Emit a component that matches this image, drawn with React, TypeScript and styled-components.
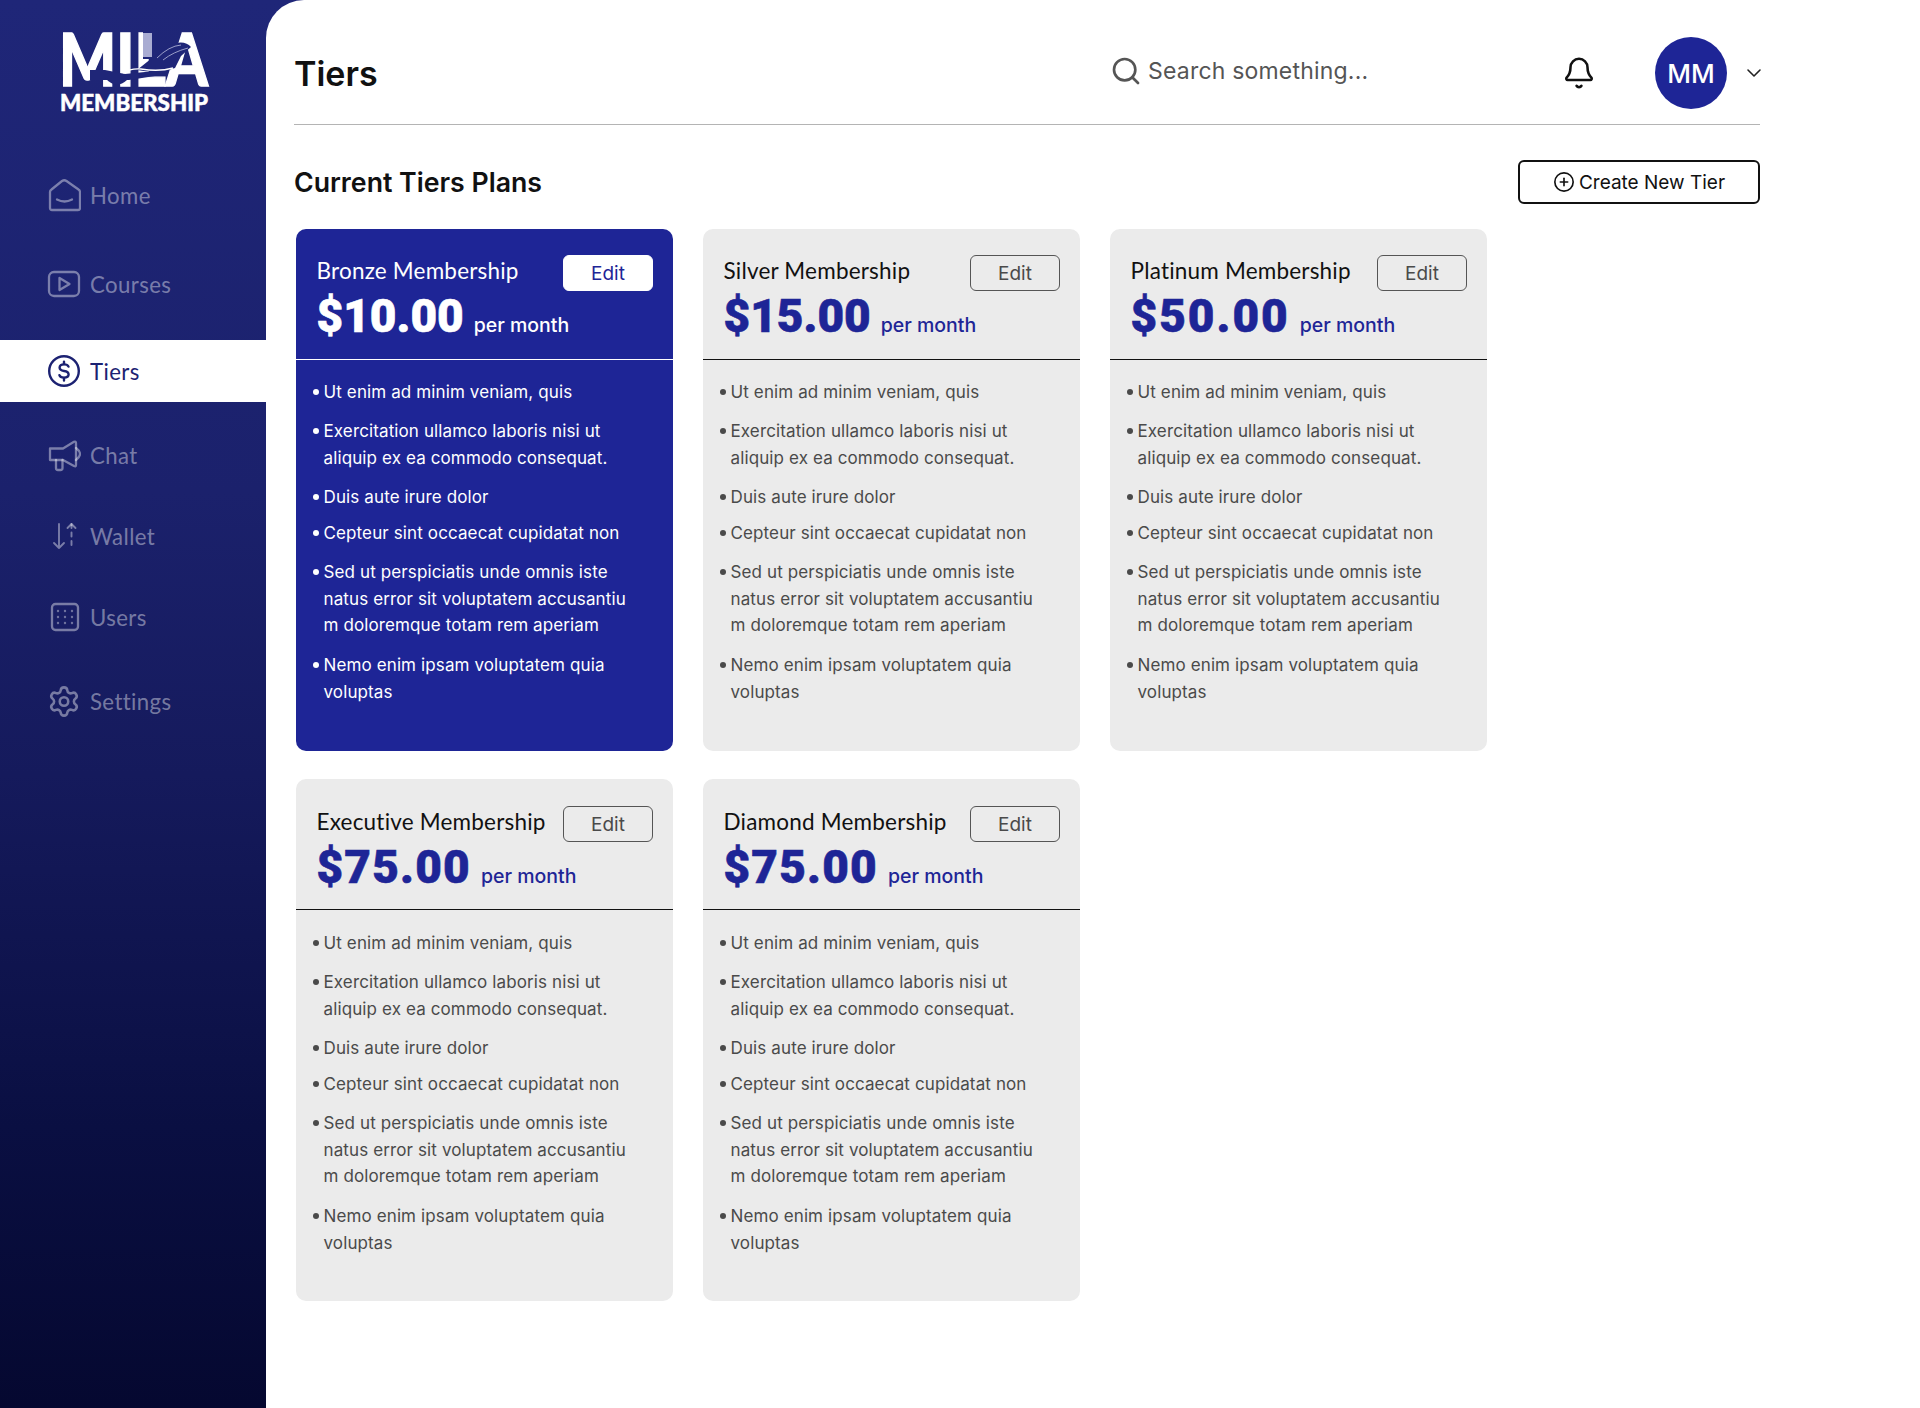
import React from "react";
import styled, { createGlobalStyle } from "styled-components";
import { Search, Bell, ChevronDown, CirclePlus, Settings } from "lucide-react";

const Global = createGlobalStyle`
  html, body { margin: 0; padding: 0; background: #fff; }
  * { box-sizing: border-box; }
  body { font-family: "Inter", "Liberation Sans", sans-serif; }
`;

const Shell = styled.div`
  display: flex;
  width: 1920px;
  height: 1408px;
  overflow: hidden;
  background: linear-gradient(180deg, #1f2678 0%, #1b216c 35%, #151a5c 55%, #0a0f42 80%, #050830 100%);
`;
const Sidebar = styled.aside`
  width: 266px;
  flex: none;
  display: flex;
  flex-direction: column;
`;
const LogoWrap = styled.div`
  height: 164px;
  padding: 30px 0 0 59px;
`;
const Nav = styled.nav`
  display: flex;
  flex-direction: column;
`;
const NavItem = styled.div<{ $active?: boolean; $gap: number }>`
  height: 62px;
  margin-top: ${(p) => p.$gap}px;
  padding-left: 47px;
  display: flex;
  align-items: center;
  gap: 9px;
  font-family: "Lato", sans-serif;
  font-size: 22.2px;
  letter-spacing: 0.4px;
  background: ${(p) => (p.$active ? "#fff" : "transparent")};
  color: ${(p) => (p.$active ? "#1c2272" : "rgba(255,255,255,0.42)")};
`;
const NavIcon = styled.span`
  width: 34px;
  height: 34px;
  flex: none;
  display: flex;
  align-items: center;
  justify-content: center;
`;
const Main = styled.main`
  flex: 1;
  min-width: 0;
  background: #fff;
  border-top-left-radius: 38px;
  padding: 0 160px 0 28px;
`;
const Header = styled.header`
  height: 125px;
  padding-top: 22px;
  display: flex;
  align-items: center;
  border-bottom: 1.5px solid #b4b4b4;
`;
const Title = styled.h1`
  margin: 0;
  width: 816px;
  flex: none;
  font-family: "Inter", sans-serif;
  font-size: 34px;
  font-weight: 600;
  color: #111;
`;
const SearchBox = styled.div`
  width: 452px;
  flex: none;
  padding-bottom: 5px;
  display: flex;
  align-items: center;
  gap: 6px;
  color: #555;
  font-size: 23px;
  letter-spacing: 0.2px;
`;
const BellBox = styled.div`
  width: 93px;
  flex: none;
  display: flex;
  color: #111;
`;
const Avatar = styled.div`
  width: 72px;
  height: 72px;
  flex: none;
  border-radius: 50%;
  background: #1e2596;
  color: #fff;
  font-family: "Inter", sans-serif;
  font-weight: 500;
  font-size: 26px;
  display: flex;
  align-items: center;
  justify-content: center;
`;
const Chevron = styled.div`
  margin: 0 -6px 0 15px;
  flex: none;
  display: flex;
  color: #222;
`;
const SectionHead = styled.div`
  height: 104px;
  padding-top: 10px;
  display: flex;
  align-items: center;
  justify-content: space-between;
`;
const SectionTitle = styled.h2`
  margin: 0;
  font-size: 26.7px;
  font-weight: 600;
  color: #111;
`;
const CreateButton = styled.button`
  width: 242px;
  height: 44px;
  border: 2px solid #111;
  border-radius: 6px;
  background: #fff;
  color: #111;
  font-family: "Inter", sans-serif;
  font-size: 19px;
  font-weight: 400;
  display: flex;
  align-items: center;
  justify-content: center;
  gap: 4px;
  padding: 0;
`;
const Grid = styled.div`
  display: grid;
  grid-template-columns: repeat(3, 377px);
  grid-auto-rows: 522px;
  column-gap: 30px;
  row-gap: 28px;
  padding-left: 2px;
`;
const Card = styled.article<{ $active?: boolean }>`
  border-radius: 10px;
  background: ${(p) => (p.$active ? "#1e2596" : "#ebebeb")};
  color: ${(p) => (p.$active ? "#fff" : "#4a4a4a")};
`;
const CardHead = styled.div<{ $active?: boolean; $lower?: boolean }>`
  height: 131px;
  padding: ${(p) => (p.$lower ? 27 : 26)}px 20px 0 20.5px;
  border-bottom: 1.5px solid ${(p) => (p.$active ? "#fff" : "#111")};
`;
const PlanRow = styled.div`
  display: flex;
  justify-content: space-between;
  align-items: flex-start;
`;
const PlanName = styled.div<{ $active?: boolean }>`
  font-family: "Lato", sans-serif;
  font-size: 22.5px;
  line-height: 31px;
  letter-spacing: 0.2px;
  white-space: nowrap;
  color: ${(p) => (p.$active ? "#fff" : "#111")};
`;
const EditButton = styled.button<{ $active?: boolean }>`
  width: 90px;
  height: 36px;
  border-radius: 6px;
  border: 1.5px solid ${(p) => (p.$active ? "#fff" : "#555")};
  background: ${(p) => (p.$active ? "#fff" : "transparent")};
  color: ${(p) => (p.$active ? "#1e2596" : "#4a4a4a")};
  font-family: "Inter", sans-serif;
  font-size: 19px;
  padding: 0;
`;
const PriceRow = styled.div`
  display: flex;
  align-items: baseline;
  gap: 10px;
  margin-top: -4px;
`;
const Price = styled.span<{ $active?: boolean; $track: number }>`
  font-family: "Roboto", sans-serif;
  font-size: 46px;
  line-height: 58px;
  font-weight: 900;
  letter-spacing: ${(p) => p.$track}px;
  -webkit-text-stroke: 0.6px currentColor;
  color: ${(p) => (p.$active ? "#fff" : "#1e2596")};
`;
const Per = styled.span<{ $active?: boolean }>`
  font-size: 19.5px;
  font-weight: 500;
  color: ${(p) => (p.$active ? "#fff" : "#1e2596")};
`;
const List = styled.ul<{ $lower?: boolean }>`
  list-style: none;
  margin: 0;
  padding: ${(p) => (p.$lower ? 20 : 19)}px 16px 0 17px;
`;
const Item = styled.li<{ $mt: number }>`
  position: relative;
  margin-top: ${(p) => p.$mt}px;
  padding-left: 10.5px;
  font-size: 17px;
  line-height: 26.6px;
  letter-spacing: 0.12px;
  &::before {
    content: "";
    position: absolute;
    left: 0;
    top: 10px;
    width: 6px;
    height: 6px;
    border-radius: 50%;
    background: currentColor;
  }
`;

const Stroke = { fill: "none", stroke: "currentColor", strokeWidth: 2.3, strokeLinecap: "round", strokeLinejoin: "round" } as const;

const HomeIcon = () => (
  <svg width="34" height="34" viewBox="0 0 34 34" {...Stroke}>
    <path d="M3 14 Q3 12.5 4.5 11.5 L15 3 Q17.3 1.5 19.5 3 L31.5 11.5 Q33 12.5 33 14 V30 Q33 32 31 32 H5 Q3 32 3 30 Z" />
    <path d="M10 21.5 Q17.5 25.5 25 21.5" />
  </svg>
);
const PlayIcon = () => (
  <svg width="34" height="28" viewBox="0 0 34 28" {...Stroke}>
    <rect x="2" y="2" width="30" height="24" rx="5" />
    <path d="M12.5 8 L22.5 14 L12.5 20 Z" />
  </svg>
);
const DollarIcon = () => (
  <svg width="34" height="34" viewBox="0 0 34 34" fill="none" stroke="currentColor" strokeLinecap="round">
    <circle cx="17" cy="17" r="14.8" strokeWidth="2.4" />
    <path d="M21.5 12.6 Q20.6 10.4 17 10.4 Q12.6 10.4 12.6 13.6 Q12.6 16.4 17 17 Q21.6 17.6 21.6 20.6 Q21.6 23.6 17 23.6 Q13.2 23.6 12.4 21.2" strokeWidth="2.4" />
    <path d="M17 7.6 V10 M17 24 V26.6" strokeWidth="2.4" />
  </svg>
);
const MegaphoneIcon = () => (
  <svg width="34" height="34" viewBox="0 0 34 34" {...Stroke}>
    <path d="M3 10.5 H16 L27 3.8 Q29 3 29 5 V27 Q29 29 27 28 L16 22 H3 Z" />
    <path d="M9 22 V30 Q9 32 11 32 H13.5 Q15.5 32 15.5 30 V22" />
    <path d="M29 10 Q33 13 33 16 Q33 19 29 22" />
  </svg>
);
const ArrowsIcon = () => (
  <svg width="34" height="34" viewBox="0 0 34 34" {...Stroke} strokeWidth={1.9}>
    <path d="M12 5 V29 M7 24 L12 29 L17 24" />
    <path d="M24.5 5 V30" strokeDasharray="4 4.5" />
    <path d="M20.5 9 L24.5 5 L28.5 9" />
  </svg>
);
const DotsIcon = () => (
  <svg width="34" height="34" viewBox="0 0 34 34" {...Stroke}>
    <rect x="5" y="4" width="26" height="26" rx="3.5" />
    {[11, 18, 25].map((x) =>
      [11, 17, 23].map((y) => <circle key={x + "-" + y} cx={x} cy={y} r="0.4" strokeWidth="1.6" />)
    )}
  </svg>
);

const LogoMark = styled.svg`
  display: block;
  overflow: visible;
`;

const MilaLogo = () => (
  <LogoMark width="152" height="84" viewBox="0 0 152 84">
    <text x="0" y="56" fontFamily="Lato" fontWeight="900" fontSize="72" textLength="149" lengthAdjust="spacingAndGlyphs" fill="#fff" stroke="#fff" strokeWidth="1.4">MILA</text>
    <path d="M31 40 H46 L66 44 L96 41 L96 46 L70 50 H31 Z" fill="#1f2678" />
    <path d="M46 48 Q57 60 68 50 L68 46 H46 Z" fill="#1f2678" />
    <path d="M84 0 H96 V29 H84 Z" fill="#1f2678" />
    <rect x="84" y="3" width="9" height="24" fill="#a9acd2" />
    <path d="M93 28 L117 13 Q127 11 132 17 L122 26 L116 38 Q100 44 78 40 Z" fill="#1f2678" />
    <path d="M98 28 Q110 16 122 15 M104 30 Q114 22 129 18" fill="none" stroke="#9a9ec8" strokeWidth="1" />
    <path d="M64 43 Q72 38 82 39 Q100 42 114 38" fill="none" stroke="#fff" strokeWidth="1.4" />
    <text x="1" y="81" fontFamily="Lato" fontWeight="900" fontSize="22.5" textLength="148" lengthAdjust="spacingAndGlyphs" fill="#fff" stroke="#fff" strokeWidth="0.5">MEMBERSHIP</text>
  </LogoMark>
);

const nav = [
  { label: "Home", icon: <HomeIcon />, gap: 0 },
  { label: "Courses", icon: <PlayIcon />, gap: 27 },
  { label: "Tiers", icon: <DollarIcon />, gap: 25, active: true },
  { label: "Chat", icon: <MegaphoneIcon />, gap: 22 },
  { label: "Wallet", icon: <ArrowsIcon />, gap: 19 },
  { label: "Users", icon: <DotsIcon />, gap: 19 },
  { label: "Settings", icon: <Settings size={35} strokeWidth={1.8} />, gap: 22 },
];

const features: { text: React.ReactNode; mt: number }[] = [
  { text: "Ut enim ad minim veniam, quis", mt: 0 },
  { text: <>Exercitation ullamco laboris nisi ut<br />aliquip ex ea commodo consequat.</>, mt: 12.5 },
  { text: "Duis aute irure dolor", mt: 12.5 },
  { text: "Cepteur sint occaecat cupidatat non", mt: 9.5 },
  { text: <>Sed ut perspiciatis unde omnis iste<br />natus error sit voluptatem accusantiu<br />m doloremque totam rem aperiam</>, mt: 12.5 },
  { text: <>Nemo enim ipsam voluptatem quia<br />voluptas</>, mt: 13.5 },
];

const plans = [
  { name: "Bronze Membership", price: "$10.00", track: 0, active: true },
  { name: "Silver Membership", price: "$15.00", track: 0 },
  { name: "Platinum Membership", price: "$50.00", track: 2 },
  { name: "Executive Membership", price: "$75.00", track: 1.2, lower: true },
  { name: "Diamond Membership", price: "$75.00", track: 1.2, lower: true },
];

export default function App() {
  return (
    <>
      <Global />
      <Shell>
        <Sidebar>
          <LogoWrap>
            <MilaLogo />
          </LogoWrap>
          <Nav>
            {nav.map((n) => (
              <NavItem key={n.label} $active={n.active} $gap={n.gap}>
                <NavIcon>{n.icon}</NavIcon>
                {n.label}
              </NavItem>
            ))}
          </Nav>
        </Sidebar>
        <Main>
          <Header>
            <Title>Tiers</Title>
            <SearchBox>
              <Search size={32} strokeWidth={2} />
              Search something...
            </SearchBox>
            <BellBox>
              <Bell size={34} strokeWidth={1.8} />
            </BellBox>
            <Avatar>MM</Avatar>
            <Chevron>
              <ChevronDown size={24} strokeWidth={1.6} />
            </Chevron>
          </Header>
          <SectionHead>
            <SectionTitle>Current Tiers Plans</SectionTitle>
            <CreateButton>
              <CirclePlus size={22} strokeWidth={1.8} />
              Create New Tier
            </CreateButton>
          </SectionHead>
          <Grid>
            {plans.map((p) => (
              <Card key={p.name} $active={p.active}>
                <CardHead $active={p.active} $lower={p.lower}>
                  <PlanRow>
                    <PlanName $active={p.active}>{p.name}</PlanName>
                    <EditButton $active={p.active}>Edit</EditButton>
                  </PlanRow>
                  <PriceRow>
                    <Price $active={p.active} $track={p.track}>{p.price}</Price>
                    <Per $active={p.active}>per month</Per>
                  </PriceRow>
                </CardHead>
                <List $lower={p.lower}>
                  {features.map((f, i) => (
                    <Item key={i} $mt={f.mt}>{f.text}</Item>
                  ))}
                </List>
              </Card>
            ))}
          </Grid>
        </Main>
      </Shell>
    </>
  );
}
